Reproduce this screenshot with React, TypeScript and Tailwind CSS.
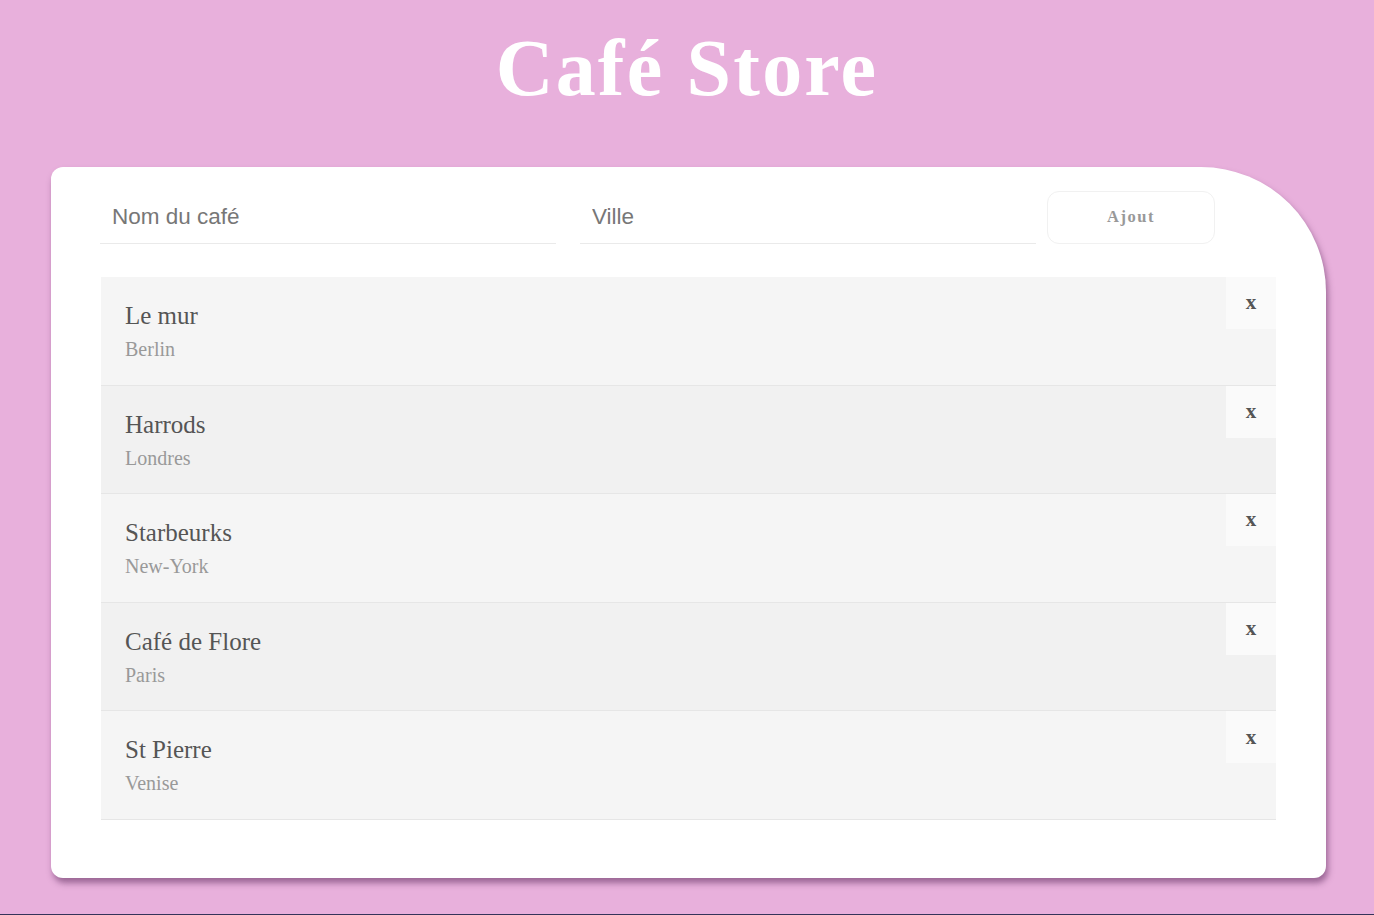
import React, { useState } from 'react';

interface Cafe {
  id: number;
  name: string;
  city: string;
}

const initialCafes: Cafe[] = [
  { id: 1, name: 'Le mur', city: 'Berlin' },
  { id: 2, name: 'Harrods', city: 'Londres' },
  { id: 3, name: 'Starbeurks', city: 'New-York' },
  { id: 4, name: 'Café de Flore', city: 'Paris' },
  { id: 5, name: 'St Pierre', city: 'Venise' },
];

const serif = 'font-["Liberation_Serif","Times_New_Roman",serif]';

const App = () => {
  const [cafes, setCafes] = useState<Cafe[]>(initialCafes);
  const [name, setName] = useState('');
  const [city, setCity] = useState('');

  const handleSubmit = (e: React.FormEvent) => {
    e.preventDefault();
    if (!name || !city) return;
    setCafes([...cafes, { id: Date.now(), name, city }]);
    setName('');
    setCity('');
  };

  return (
    <div className="min-h-[915px] flex flex-col bg-[#e8b0dc]">
      <div className="flex-1">
        <h1
          className={`${serif} text-center text-white font-bold text-[80px] leading-[92px] tracking-[2.2px] pt-[22px]`}
        >
          Café Store
        </h1>

        {/* main card */}
        <div className="ml-[51px] mt-[53px] w-[1275px] bg-white rounded-xl rounded-tr-[125px] shadow-[2px_5px_6px_rgba(90,40,90,0.55)] px-[50px] pt-[24px] pb-[58px]">
          <form onSubmit={handleSubmit} className="flex items-center -ml-px">
            <input
              value={name}
              onChange={e => setName(e.target.value)}
              placeholder="Nom du café"
              className='w-[456px] h-[53px] px-[12px] border-b border-[#eaeaea] outline-none text-[22.5px] text-[#666] placeholder:text-[#777] font-["Liberation_Sans",Arial,sans-serif]'
            />
            <input
              value={city}
              onChange={e => setCity(e.target.value)}
              placeholder="Ville"
              className='w-[456px] h-[53px] ml-[24px] px-[12px] border-b border-[#eaeaea] outline-none text-[22.5px] text-[#666] placeholder:text-[#777] font-["Liberation_Sans",Arial,sans-serif]'
            />
            <button
              type="submit"
              className={`${serif} ml-[11px] w-[168px] h-[53px] rounded-xl border border-[#f1f1f1] bg-white text-[16.5px] font-bold tracking-[1.5px] text-[#999]`}
            >
              Ajout
            </button>
          </form>

          <ul className="mt-[33px]">
            {cafes.map((cafe, i) => (
              <li
                key={cafe.id}
                className={`flex justify-between border-b border-[#e6e6e6] ${i % 2 === 0 ? 'bg-[#f5f5f5]' : 'bg-[#f1f1f1]'}`}
              >
                <div className={`${serif} pl-[24px] pt-[25px] pb-[24.6px]`}>
                  <span className="block text-[25px] leading-[28px] text-[#555]">{cafe.name}</span>
                  <span className="block mt-[8px] text-[20px] leading-[22px] text-[#999]">{cafe.city}</span>
                </div>
                <div
                  onClick={() => setCafes(cafes.filter(c => c.id !== cafe.id))}
                  className={`${serif} w-[50px] h-[52px] flex items-center justify-center bg-[#fafafa] text-[21px] font-bold text-[#555] cursor-pointer`}
                >
                  x
                </div>
              </li>
            ))}
          </ul>
        </div>
      </div>
      <div className="h-px bg-[#34345a]" />
    </div>
  );
};

export default App;
